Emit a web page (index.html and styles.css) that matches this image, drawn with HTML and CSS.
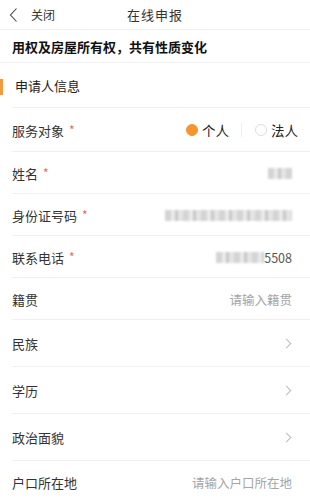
FILE: index.html
```html
<!DOCTYPE html>
<html lang="zh-CN">
<head>
  <meta charset="UTF-8" />
  <meta name="viewport" content="width=device-width, initial-scale=1.0" />
  <title>在线申报</title>
  <link rel="stylesheet" href="styles.css">
</head>
<body>
  <header class="topbar">
    <a class="back">
      <svg width="9" height="16" viewBox="0 0 9 16"><path d="M7.5 1.5 L1.5 8 L7.5 14.5" fill="none" stroke="#444" stroke-width="1.1"/></svg>
      <span>关闭</span>
    </a>
    <div class="title">在线申报</div>
  </header>
  <div class="subject">用权及房屋所有权，共有性质变化</div>

  <div class="section">申请人信息</div>

  <div class="row r-radio">
    <span class="label">服务对象<i>*</i></span>
    <div class="radios">
      <span class="radio on"><b></b>个人</span>
      <span class="sep"></span>
      <span class="radio"><b></b>法人</span>
    </div>
  </div>
  <div class="row">
    <span class="label">姓名<i>*</i></span>
    <span class="blur w-name"></span>
  </div>
  <div class="row">
    <span class="label">身份证号码<i>*</i></span>
    <span class="blur w-id"></span>
  </div>
  <div class="row">
    <span class="label">联系电话<i>*</i></span>
    <span class="value"><span class="blur w-tel"></span>5508</span>
  </div>
  <div class="row">
    <span class="label">籍贯</span>
    <span class="hint">请输入籍贯</span>
  </div>
  <div class="row tall">
    <span class="label">民族</span>
    <span class="arrow"></span>
  </div>
  <div class="row tall">
    <span class="label">学历</span>
    <span class="arrow"></span>
  </div>
  <div class="row tall">
    <span class="label">政治面貌</span>
    <span class="arrow"></span>
  </div>
  <div class="row">
    <span class="label">户口所在地</span>
    <span class="hint">请输入户口所在地</span>
  </div>
</body>
</html>
```

FILE: styles.css
```css
* { box-sizing: border-box; margin: 0; padding: 0; }
body {
  font-family: "Noto Sans CJK SC", "Noto Sans", sans-serif;
  background: #fff; color: #333;
  width: 310px; overflow: hidden;
}
.topbar {
  height: 30px; position: relative;
  display: flex; align-items: center;
  justify-content: center;
  border-bottom: 1px solid #f0f0f0;
}
.back {
  position: absolute; left: 9px; top: 0; height: 29px;
  display: flex; align-items: center; gap: 13px;
  font-size: 12px; color: #333;
}
.title { font-size: 13px; color: #333; letter-spacing: 1px; }
.subject {
  height: 33px; padding: 0 12px;
  display: flex; align-items: center;
  font-size: 13px; font-weight: bold; color: #111;
  border-bottom: 1px solid #f0f0f0;
}
.section {
  height: 45px; padding-left: 15px;
  display: flex; align-items: center;
  font-size: 13px; color: #222;
  position: relative;
}
.section::before {
  content: ""; position: absolute;
  left: 0; top: 16px; width: 3px; height: 16px;
  background: #f39a3c;
}
.section::after, .row::after {
  content: ""; position: absolute;
  left: 12px; right: 0; bottom: 0; height: 1px;
  background: #f0f0f0;
}
.row {
  height: 42px; padding: 0 18px 0 12px;
  display: flex; align-items: center;
  justify-content: space-between;
  position: relative;
}
.r-radio { height: 44px; padding-right: 12px; }
.row.tall { height: 47px; }
.label { font-size: 13px; color: #333; }
.label i {
  font-style: normal; color: #e26a5c;
  font-size: 12px; margin-left: 5px;
  position: relative; top: -1px;
}
.radios { display: flex; align-items: center; font-size: 13.5px; color: #222; }
.radio { display: flex; align-items: center; gap: 4px; }
.radio b {
  width: 12px; height: 12px; border-radius: 50%;
  border: 1px solid #ddd; display: inline-block;
}
.radio.on b { background: #f6952e; border-color: #f6952e; }
.radios .sep { width: 1px; height: 14px; background: #eee; margin: 0 13px 0 12px; }
.hint { font-size: 12.5px; color: #a5a5a5; }
.value { display: flex; align-items: center; font-size: 12.5px; color: #555; }
.blur {
  display: inline-block; height: 11px;
  background: repeating-linear-gradient(90deg, #d4d4d4 0 6px, #ebebeb 6px 10px, #c8c8c8 10px 13px, #e4e4e4 13px 18px);
  filter: blur(1.2px);
}
.w-name { width: 24px; }
.w-id { width: 127px; }
.w-tel { width: 48px; }
.arrow {
  width: 7px; height: 7px; margin-right: 2px;
  border-top: 1px solid #bbb; border-right: 1px solid #bbb;
  transform: rotate(45deg);
}
```
